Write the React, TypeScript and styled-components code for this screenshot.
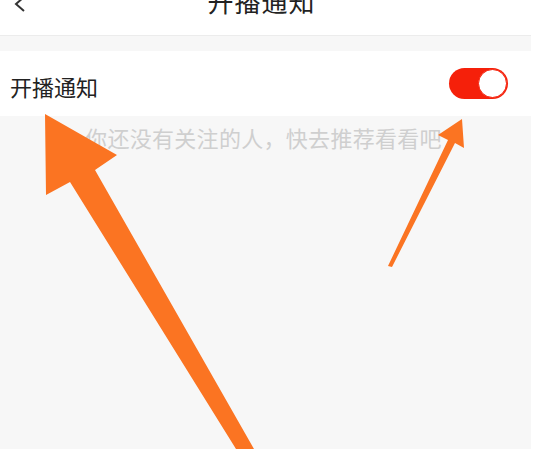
import styled, { createGlobalStyle } from "styled-components";

const GlobalStyle = createGlobalStyle`
  html, body {
    margin: 0;
    padding: 0;
    background: #fff;
    overflow: hidden;
  }
  body {
    font-family: "Noto Sans CJK SC", "Noto Sans", sans-serif;
  }
`

const Page = styled.div`
  position: relative;
  width: 535px;
  height: 449px;
  overflow: hidden;
  background: #fff;
`

const Screen = styled.div`
  width: 531px;
  height: 100%;
  display: flex;
  flex-direction: column;
  background: #f7f7f7;
`

const Header = styled.header`
  height: 35px;
  flex-shrink: 0;
  display: flex;
  justify-content: center;
  align-items: flex-start;
  background: #fff;
  border-bottom: 1px solid #ececec;
  position: relative;
`

const BackIcon = styled.svg`
  position: absolute;
  left: 12px;
  top: -4px;
`

const Title = styled.h1`
  margin: -14px 0 0 -8px;
  font-size: 26px;
  line-height: 30px;
  font-weight: 400;
  color: #222;
  letter-spacing: 1px;
`

const Gap = styled.div`
  height: 15px;
  flex-shrink: 0;
`

const Row = styled.div`
  height: 65px;
  flex-shrink: 0;
  display: flex;
  align-items: center;
  justify-content: space-between;
  padding: 0 23px 0 10px;
  background: #fff;
`

const Label = styled.span`
  font-size: 22px;
  color: #222;
  padding-top: 4px;
`

const Toggle = styled.div<{ $on: boolean }>`
  width: 59px;
  height: 31px;
  box-sizing: border-box;
  border-radius: 16px;
  background: ${({ $on }) => ($on ? "#f5200a" : "#ddd")};
  display: flex;
  align-items: center;
  justify-content: ${({ $on }) => ($on ? "flex-end" : "flex-start")};
  padding: 0 1px;
`

const Knob = styled.div`
  width: 29px;
  height: 29px;
  box-sizing: border-box;
  border-radius: 50%;
  background: #fff;
  border: 1px solid #f5200a;
`

const Empty = styled.div`
  flex: 1;
  display: flex;
  justify-content: center;
  padding: 8px 0 0 0;
`

const Hint = styled.p`
  margin: 0 0 0 -4px;
  font-size: 22px;
  line-height: 26px;
  letter-spacing: 0.3px;
  color: #cfcfcf;
`

const Overlay = styled.svg`
  position: absolute;
  left: 0;
  top: 0;
  pointer-events: none;
`

export default function App() {
  const on = true

  return (
    <>
      <GlobalStyle />
      <Page>
        <Screen>
          <Header>
            <BackIcon width="16" height="18" viewBox="0 0 16 18">
              <path d="M12 1 L4 8 L12 15" fill="none" stroke="#333" strokeWidth="2" />
            </BackIcon>
            <Title>开播通知</Title>
          </Header>
          <Gap />
          <Row>
            <Label>开播通知</Label>
            <Toggle $on={on}>
              <Knob />
            </Toggle>
          </Row>
          <Empty>
            <Hint>你还没有关注的人，快去推荐看看吧</Hint>
          </Empty>
        </Screen>
        <Overlay width="535" height="449" viewBox="0 0 535 449">
          <polygon
            fill="#fb7422"
            points="45,114 117,155 95,170 254,449 236,449 70,182 46,195"
          />
          <polygon
            fill="#fb7422"
            points="462,119 464,148 455,143 392,267 388,266 448,140 438,135"
          />
        </Overlay>
      </Page>
    </>
  )
}
